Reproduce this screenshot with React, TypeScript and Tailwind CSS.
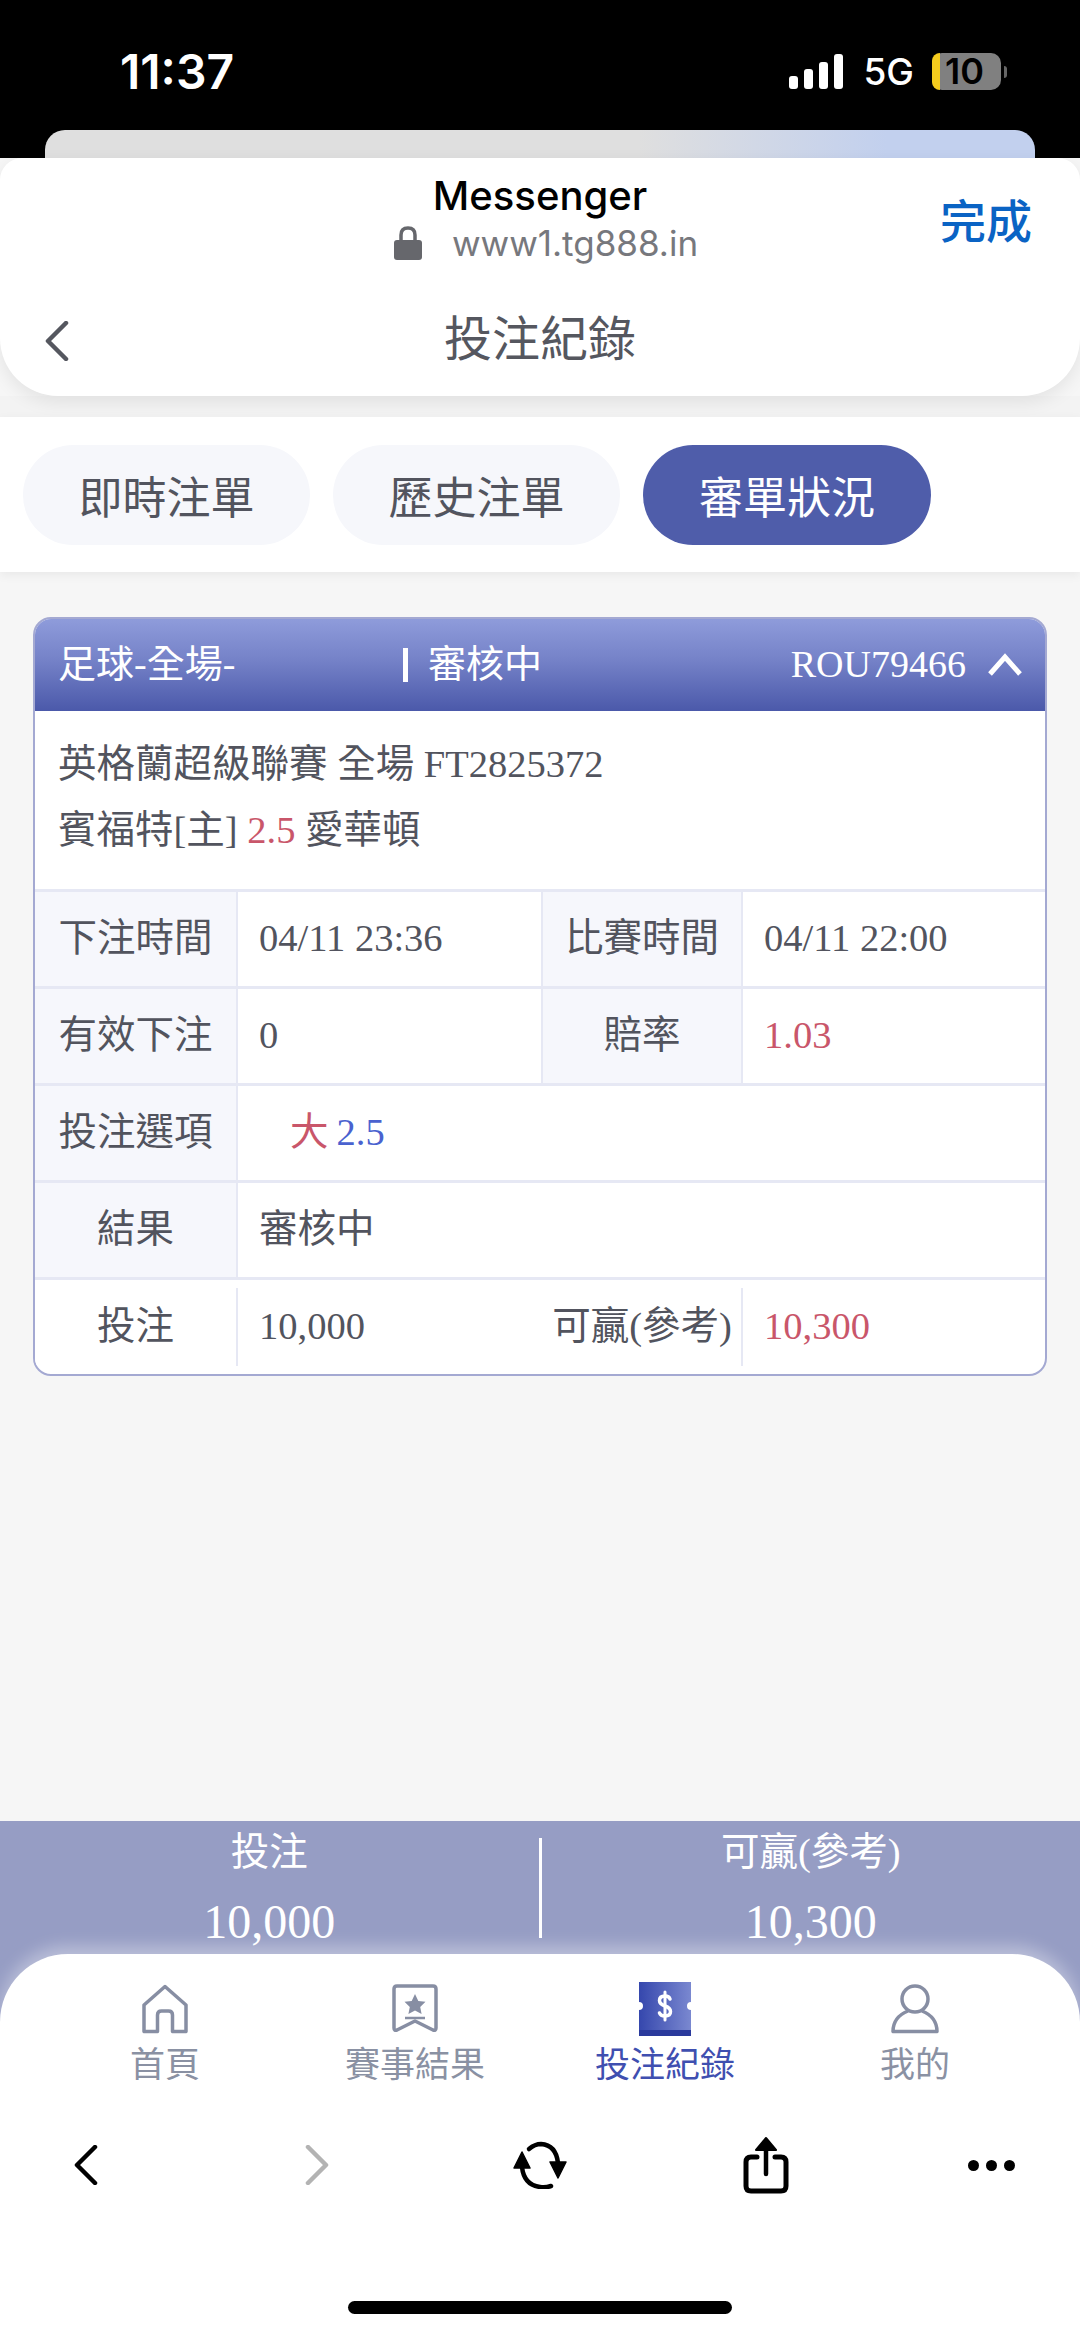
import React from "react";

const serif = "font-['Liberation_Serif','Noto_Sans_CJK_TC',serif]";

const HomeIcon = () => (
  <svg width="46" height="50" viewBox="0 0 46 50" fill="none" stroke="#878ea3" strokeWidth="3.5" strokeLinejoin="round">
    <path d="M23 2.5 L44 21 V47.5 H30.5 V31 Q30.5 27 26.5 27 H19.5 Q15.5 27 15.5 31 V47.5 H2 V21 Z" />
  </svg>
);

const ResultIcon = () => (
  <svg width="46" height="50" viewBox="0 0 46 50" fill="none">
    <path d="M5 2 H41 Q44 2 44 5 V44 Q44 47 41 46 L23 37 L5 46 Q2 47 2 44 V5 Q2 2 5 2 Z" stroke="#878ea3" strokeWidth="3.5" strokeLinejoin="round" />
    <path d="M23 10 L26.3 17 L33.5 17.8 L28.2 23 L29.6 30 L23 26.5 L16.4 30 L17.8 23 L12.5 17.8 L19.7 17 Z" fill="#878ea3" />
    <path d="M13 34 H33" stroke="#878ea3" strokeWidth="2.5" />
  </svg>
);

const TicketIcon = () => (
  <svg width="52" height="54" viewBox="0 0 52 54">
    <defs>
      <linearGradient id="tk" x1="0" x2="1" y1="0" y2="0">
        <stop offset="0" stopColor="#3547ad" />
        <stop offset="1" stopColor="#7a88d0" />
      </linearGradient>
    </defs>
    <path d="M0 0 H52 V20 A4 4 0 0 0 52 28 V54 H0 V28 A4 4 0 0 0 0 20 Z" fill="url(#tk)" />
    <rect x="0" y="48" width="52" height="6" fill="#2a3a9c" />
    <path d="M31 17 Q30 14 26 14 Q20.500 14 20.500 18.500 Q20.500 22 26 24 Q31.500 26 31.500 29.500 Q31.500 34 26 34 Q21.500 34 20.500 31" fill="none" stroke="#fff" strokeWidth="3.500" strokeLinecap="round" />
    <path d="M26 10 V38" stroke="#fff" strokeWidth="3" strokeLinecap="round" />
  </svg>
);

const UserIcon = () => (
  <svg width="48" height="50" viewBox="0 0 48 50" fill="none" stroke="#878ea3" strokeWidth="3.500" strokeLinejoin="round">
    <circle cx="24" cy="15" r="13" />
    <path d="M17 27 Q2 33 2 47.500 H46 Q46 33 31 27" />
  </svg>
);

const Chevron = ({ dir, color, className }: { dir: "left" | "right"; color: string; className?: string }) => (
  <svg width="24" height="40" viewBox="0 0 24 40" fill="none" className={className}>
    <path d={dir === "left" ? "M21 2 L3 20 L21 38" : "M3 2 L21 20 L3 38"} stroke={color} strokeWidth="4.500" strokeLinecap="round" strokeLinejoin="round" />
  </svg>
);

const Label = ({ children, className = "" }: { children: React.ReactNode; className?: string }) => (
  <div className={`flex items-center justify-center bg-[#f6f7fc] border-r-2 border-[#e6e8f4] ${className}`}>{children}</div>
);

const Value = ({ children, className = "" }: { children: React.ReactNode; className?: string }) => (
  <div className={`flex items-center pl-[21px] ${className}`}>{children}</div>
);

const navItems = [
  { label: "首頁", icon: <HomeIcon />, active: false },
  { label: "賽事結果", icon: <ResultIcon />, active: false },
  { label: "投注紀錄", icon: <TicketIcon />, active: true },
  { label: "我的", icon: <UserIcon />, active: false },
];

export default function App() {
  return (
    <div className={`w-[1080px] h-[2337px] flex flex-col bg-[#f6f6f6] overflow-hidden text-[38.5px] text-[#52545e] ${serif}`}>
      {/* phone status + browser sheet */}
      <div className="bg-black h-[158px] flex flex-col shrink-0">
        <div className="h-[130px] flex items-start justify-between font-['Inter',sans-serif] text-white">
          <span className="ml-[120px] mt-[45px] text-[48px] leading-[54px] font-semibold">11:37</span>
          <div className="flex items-center mt-[53px] mr-[73px] h-[37px]">
            <div className="flex items-end gap-[6px] h-[35px]">
              <div className="w-[9px] h-[13px] bg-white rounded-[3px]" />
              <div className="w-[9px] h-[20px] bg-white rounded-[3px]" />
              <div className="w-[9px] h-[27px] bg-white rounded-[3px]" />
              <div className="w-[9px] h-[35px] bg-white rounded-[3px]" />
            </div>
            <span className="ml-[20px] text-[37px] font-medium leading-none">5G</span>
            <div className="ml-[18px] w-[69px] h-[37px] rounded-[10px] bg-[#808080] flex">
              <div className="w-[8px] bg-[#f5cc1d] rounded-l-[10px]" />
              <span className="ml-[5px] text-[36px] leading-[37px] font-semibold text-black">10</span>
            </div>
            <div className="ml-[3px] w-[3px] h-[12px] bg-[#666] rounded-r-full" />
          </div>
        </div>
        <div className="mx-[45px] h-[28px] rounded-t-[20px] bg-[linear-gradient(90deg,#dfdfdf_60%,#c2d0ee_85%)]" />
      </div>

      <div className="h-[238px] shrink-0 bg-white rounded-t-[22px] rounded-b-[58px] shadow-[0_6px_18px_rgba(0,0,0,0.08)] relative z-10 flex flex-col">
        <div className="h-[116px] relative flex flex-col items-center font-['Inter','Noto_Sans_CJK_TC',sans-serif]">
          <span className="mt-[14px] text-[40px] leading-[48px] font-medium text-black">Messenger</span>
          <div className="flex items-center mt-[3px] ml-[12px]">
            <svg width="28" height="34" viewBox="0 0 28 34" className="mr-[30px]">
              <path d="M7 15 V9 Q7 2 14 2 Q21 2 21 9 V15" fill="none" stroke="#66676c" strokeWidth="3.500" />
              <rect x="0" y="14" width="28" height="20" rx="3" fill="#66676c" />
            </svg>
            <span className="text-[35px] leading-[40px] text-[#77787d] font-normal">www1.tg888.in</span>
          </div>
          <span className="absolute left-[940px] top-[32px] text-[46px] leading-[56px] font-medium text-[#0a63c4] font-['Noto_Sans_CJK_TC',sans-serif]">完成</span>
        </div>
        <div className="flex-1 relative flex items-center justify-center font-['Noto_Sans_CJK_TC',sans-serif] text-[48px] text-[#55575f]">
          <Chevron dir="left" color="#55575f" className="absolute left-[45px] top-[47px]" />
          投注紀錄
        </div>
      </div>

      <div className="h-[21px] shrink-0 bg-[#f3f3f3]" />

      {/* tabs */}
      <div className="h-[155px] shrink-0 bg-white flex items-center pl-[23px] gap-[23px] shadow-[0_3px_10px_rgba(0,0,0,0.06)] font-['Noto_Sans_CJK_TC',sans-serif] text-[44px]">
        <div className="w-[287px] h-[100px] rounded-full bg-[#f6f7fb] flex items-center justify-center">即時注單</div>
        <div className="w-[287px] h-[100px] rounded-full bg-[#f6f7fb] flex items-center justify-center">歷史注單</div>
        <div className="w-[288px] h-[100px] rounded-full bg-[#4f5daa] text-white flex items-center justify-center">審單狀況</div>
      </div>

      {/* bet card */}
      <div className="flex-1 pt-[45px] px-[33px]">
        <div className="rounded-[18px] border-2 border-[#a4a9d2] bg-white overflow-hidden">
          <div className="h-[93px] -mt-[1px] flex items-center text-white bg-[linear-gradient(180deg,#8f9cdb_0%,#7582c8_45%,#4b59aa_100%)]">
            <span className="ml-[23px] w-[345px] text-[38px]">足球-全場-</span>
            <div className="w-[5px] h-[34px] bg-white" />
            <span className="ml-[20px] text-[38px]">審核中</span>
            <span className="ml-auto text-[38px]">ROU79466</span>
            <svg width="36" height="24" viewBox="0 0 36 24" fill="none" className="ml-[21px] mr-[22px]">
              <path d="M3 21 L18 4 L33 21" stroke="#fff" strokeWidth="5" />
            </svg>
          </div>
          <div className="h-[178px] pl-[23px] pt-[20px] leading-[66px]">
            <div>英格蘭超級聯賽 全場 FT2825372</div>
            <div>賓福特[主] <span className="text-[#c9566a]">2.5</span> 愛華頓</div>
          </div>

          <div className="grid grid-cols-[203px_305px_200px_1fr] h-[97px] border-t-[3px] border-[#e6e8f4]">
            <Label>下注時間</Label>
            <Value className="border-r-2 border-[#e6e8f4]">04/11 23:36</Value>
            <Label>比賽時間</Label>
            <Value>04/11 22:00</Value>
          </div>
          <div className="grid grid-cols-[203px_305px_200px_1fr] h-[97px] border-t-[3px] border-[#e6e8f4]">
            <Label>有效下注</Label>
            <Value className="border-r-2 border-[#e6e8f4]">0</Value>
            <Label>賠率</Label>
            <Value className="text-[#c9566a]">1.03</Value>
          </div>
          <div className="grid grid-cols-[203px_1fr] h-[97px] border-t-[3px] border-[#e6e8f4]">
            <Label>投注選項</Label>
            <Value className="pl-[52px]">
              <span className="text-[#c9566a]">大</span>
              <span className="ml-[8px] text-[#4a62cf]">2.5</span>
            </Value>
          </div>
          <div className="grid grid-cols-[203px_1fr] h-[97px] border-t-[3px] border-[#e6e8f4]">
            <Label>結果</Label>
            <Value>審核中</Value>
          </div>
          <div className="grid grid-cols-[203px_305px_200px_1fr] h-[97px] border-t-[3px] border-[#e6e8f4] py-[8px]">
            <Label className="bg-white">投注</Label>
            <Value>10,000</Value>
            <Label className="bg-white">可贏(參考)</Label>
            <Value className="text-[#c9566a]">10,300</Value>
          </div>
        </div>
      </div>

      {/* totals + bottom nav */}
      <div className="shrink-0 bg-[#969dc4]">
        <div className="h-[133px] flex text-white">
          <div className="flex-1 flex flex-col items-center pt-[6px]">
            <span className="leading-[50px]">投注</span>
            <span className="text-[48px] leading-[54px] mt-[18px]">10,000</span>
          </div>
          <div className="w-[3px] h-[100px] mt-[17px] bg-white" />
          <div className="flex-1 flex flex-col items-center pt-[6px]">
            <span className="leading-[50px]">可贏(參考)</span>
            <span className="text-[48px] leading-[54px] mt-[18px]">10,300</span>
          </div>
        </div>
        <div className="h-[383px] bg-white rounded-t-[68px] shadow-[0_-8px_16px_rgba(255,255,255,0.35)] relative flex flex-col">
          <div className="grid grid-cols-4 w-[1000px] ml-[40px] pt-[28px] font-['Noto_Sans_CJK_TC',sans-serif] text-[35px] text-[#8a91a3]">
            {navItems.map((item) => (
              <div key={item.label} className={`flex flex-col items-center ${item.active ? "text-[#3f4fb0]" : ""}`}>
                <div className="h-[54px] flex items-center">{item.icon}</div>
                <span className="leading-[48px] mt-[2px]">{item.label}</span>
              </div>
            ))}
          </div>
          <div className="flex items-center pl-[74px] mt-[51px] h-[56px]">
            <Chevron dir="left" color="#000" />
            <Chevron dir="right" color="#b3b3b3" className="ml-[207px]" />
            <svg width="56" height="48" viewBox="0 0 56 48" fill="none" className="ml-[183px]">
              <path d="M17 8 Q23 3 29 3 Q44 4 46 22" stroke="#000" strokeWidth="4.500" strokeLinecap="round" />
              <path d="M39 45 Q33 47 28 46 Q12 44 10 26" stroke="#000" strokeWidth="4.500" strokeLinecap="round" />
              <path d="M2 27 L10 11 L18 27 Z M38 21 L54 21 L46 37 Z" fill="#000" stroke="#000" strokeWidth="1.500" strokeLinejoin="round" />
            </svg>
            <svg width="46" height="58" viewBox="0 0 46 58" fill="none" className="ml-[175px]">
              <path d="M14 21 H8 Q3 21 3 26 V50 Q3 55 8 55 H38 Q43 55 43 50 V26 Q43 21 38 21 H32" stroke="#000" strokeWidth="5" strokeLinecap="round" />
              <path d="M23 38 V10" stroke="#000" strokeWidth="4.500" strokeLinecap="round" />
              <path d="M13 14 L23 2 L33 14 Z" fill="#000" stroke="#000" strokeWidth="2" strokeLinejoin="round" />
            </svg>
            <div className="flex gap-[7px] ml-[179px]">
              <div className="w-[11px] h-[11px] rounded-full bg-black" />
              <div className="w-[11px] h-[11px] rounded-full bg-black" />
              <div className="w-[11px] h-[11px] rounded-full bg-black" />
            </div>
          </div>
          <div className="mt-[108px] mx-auto w-[384px] h-[13px] rounded-full bg-black" />
        </div>
      </div>
    </div>
  );
}
